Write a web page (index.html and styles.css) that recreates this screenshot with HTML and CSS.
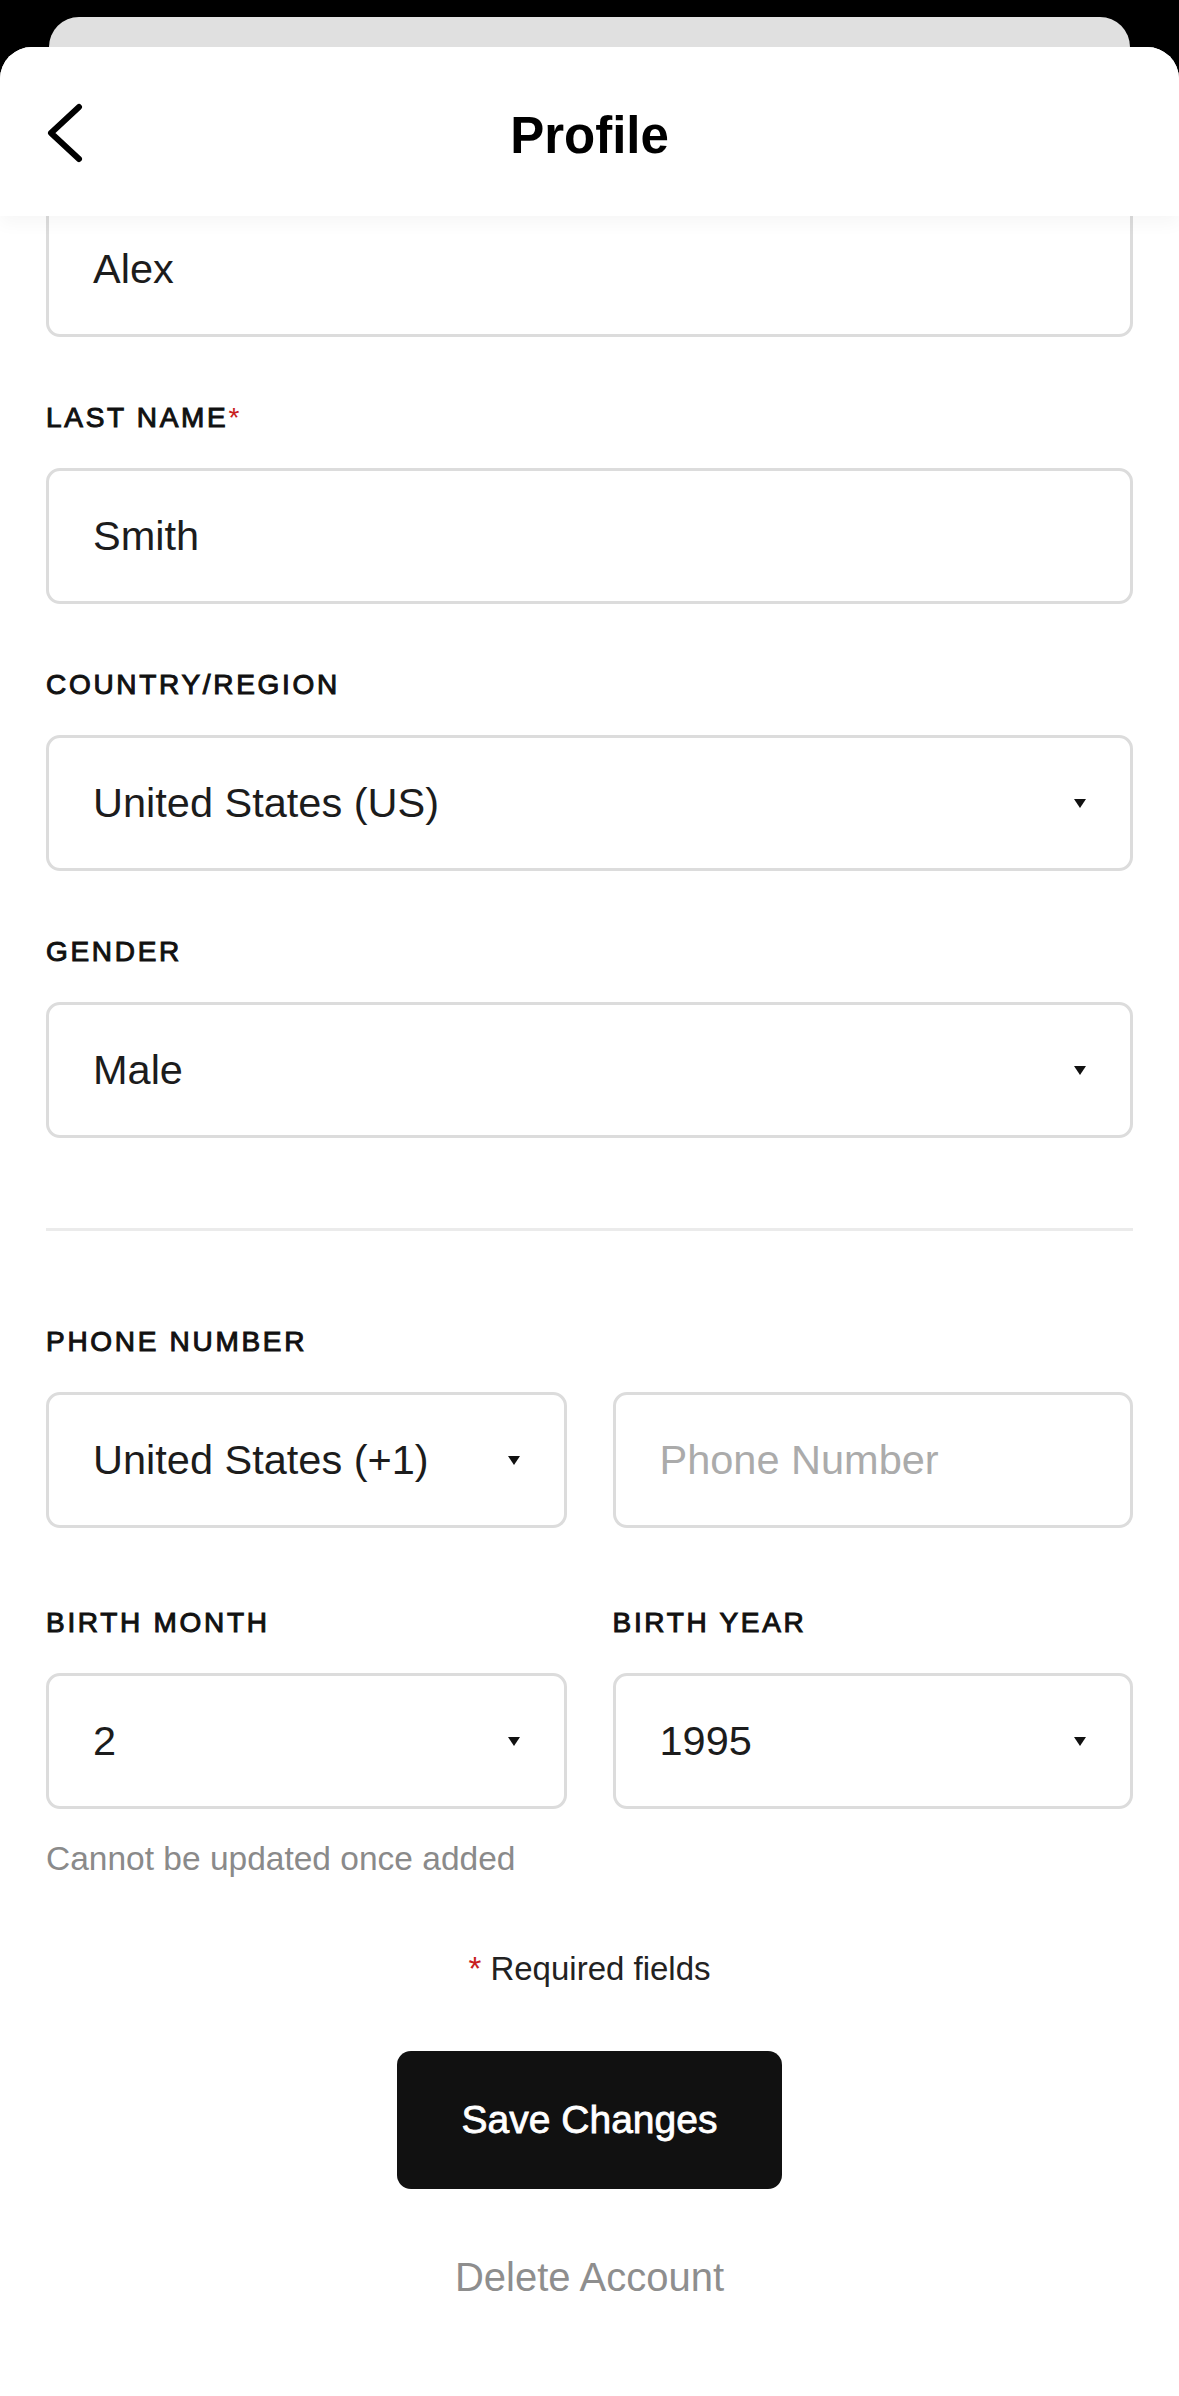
FILE: index.html
```html
<!DOCTYPE html>
<html lang="en">
<head>
    <meta charset="UTF-8">
    <meta name="viewport" content="width=device-width, initial-scale=1.0">
    <title>Profile</title>
    <link rel="stylesheet" href="styles.css">
</head>
<body>
    <div class="backcard"></div>
    <div class="sheet">
        <header class="topbar">
            <button class="back" type="button" aria-label="Back">
                <svg width="36" height="60" viewBox="0 0 36 60">
                    <polyline points="32,4 4,30 32,56" fill="none" stroke="#000" stroke-width="6" stroke-linecap="round" stroke-linejoin="round"/>
                </svg>
            </button>
            <h1>Profile</h1>
            <span></span>
        </header>

        <main class="form">
            <div class="field first">
                <div class="box">Alex</div>
            </div>

            <div class="field">
                <div class="label">Last Name<span class="req">*</span></div>
                <div class="box">Smith</div>
            </div>

            <div class="field">
                <div class="label">Country/Region</div>
                <div class="box">United States (US)<span class="caret"></span></div>
            </div>

            <div class="field">
                <div class="label">Gender</div>
                <div class="box">Male<span class="caret"></span></div>
            </div>

            <hr class="divider">

            <div class="field phone">
                <div class="label">Phone Number</div>
                <div class="pair">
                    <div class="box">United States (+1)<span class="caret"></span></div>
                    <div class="box placeholder">Phone Number</div>
                </div>
            </div>

            <div class="pair birth">
                <div>
                    <div class="label">Birth Month</div>
                    <div class="box">2<span class="caret"></span></div>
                </div>
                <div>
                    <div class="label">Birth Year</div>
                    <div class="box">1995<span class="caret"></span></div>
                </div>
            </div>

            <p class="hint">Cannot be updated once added</p>

            <p class="required"><span class="req">*</span> Required fields</p>

            <div class="actions">
                <button class="save" type="button">Save Changes</button>
                <button class="delete" type="button">Delete Account</button>
            </div>
        </main>
    </div>
</body>
</html>
```

FILE: styles.css
```css
html, body {
    margin: 0;
    background-color: #000;
}

body {
    font-family: "Liberation Sans", Arial, sans-serif;
    color: #1c1c1c;
}

.backcard {
    height: 30px;
    margin: 17px 49px 0;
    background-color: #e0e0e0;
    border-radius: 30px 30px 0 0;
}

.sheet {
    min-height: 2349px;
    background-color: #fff;
    border-radius: 32px 32px 0 0;
    overflow: hidden;
}

.topbar {
    position: relative;
    z-index: 1;
    height: 169px;
    box-sizing: border-box;
    padding: 0 47px;
    display: grid;
    grid-template-columns: 1fr auto 1fr;
    align-items: center;
    background-color: #fff;
    box-shadow: 0 8px 16px rgba(0, 0, 0, 0.035);
}

.back {
    justify-self: start;
    padding: 0;
    margin-top: 2px;
    border: none;
    background: none;
    display: flex;
}

.topbar h1 {
    margin: 8px 0 0;
    font-size: 51px;
    line-height: 51px;
    font-weight: 700;
    color: #000;
}

.form {
    padding: 0 46px 0 46px;
}

.field.first {
    margin-top: -15px;
}

.field + .field {
    margin-top: 67px;
}

.label {
    font-size: 28px;
    line-height: 28px;
    font-weight: 400;
    -webkit-text-stroke: 1px #111;
    letter-spacing: 2.7px;
    text-transform: uppercase;
    color: #111;
    margin-bottom: 36px;
}

.req {
    color: #c8201e;
    -webkit-text-stroke: 0;
}

.box {
    height: 136px;
    box-sizing: border-box;
    border: 3px solid #dcdcdc;
    border-radius: 14px;
    padding: 0 44px;
    display: flex;
    align-items: center;
    justify-content: space-between;
    font-size: 41.5px;
    background-color: #fff;
}

.box.placeholder {
    color: #ababab;
}

.caret {
    width: 0;
    height: 0;
    border-left: 6px solid transparent;
    border-right: 6px solid transparent;
    border-top: 9px solid #111;
}

.divider {
    margin: 90px 0 0;
    border: none;
    height: 3px;
    background-color: #ebebeb;
}

.field.phone {
    margin-top: 97px;
}

.pair {
    display: grid;
    grid-template-columns: 1fr 1fr;
    column-gap: 46px;
}

.pair.birth {
    margin-top: 81px;
}

.hint {
    margin: 33px 0 0;
    font-size: 33.5px;
    line-height: 33px;
    color: #8a8a8a;
}

.required {
    margin: 77px 0 0;
    text-align: center;
    font-size: 33px;
    line-height: 33px;
    color: #222;
}

.actions {
    margin-top: 66px;
    display: flex;
    flex-direction: column;
    align-items: center;
}

.save {
    width: 385px;
    height: 138px;
    border: none;
    border-radius: 14px;
    background-color: #111;
    color: #fff;
    font-family: inherit;
    font-size: 39px;
    font-weight: 400;
    -webkit-text-stroke: 0.8px #fff;
    cursor: pointer;
}

.delete {
    margin-top: 69px;
    padding: 0;
    border: none;
    background: none;
    font-family: inherit;
    font-size: 40px;
    line-height: 39px;
    color: #8e8e8e;
    cursor: pointer;
}
```
